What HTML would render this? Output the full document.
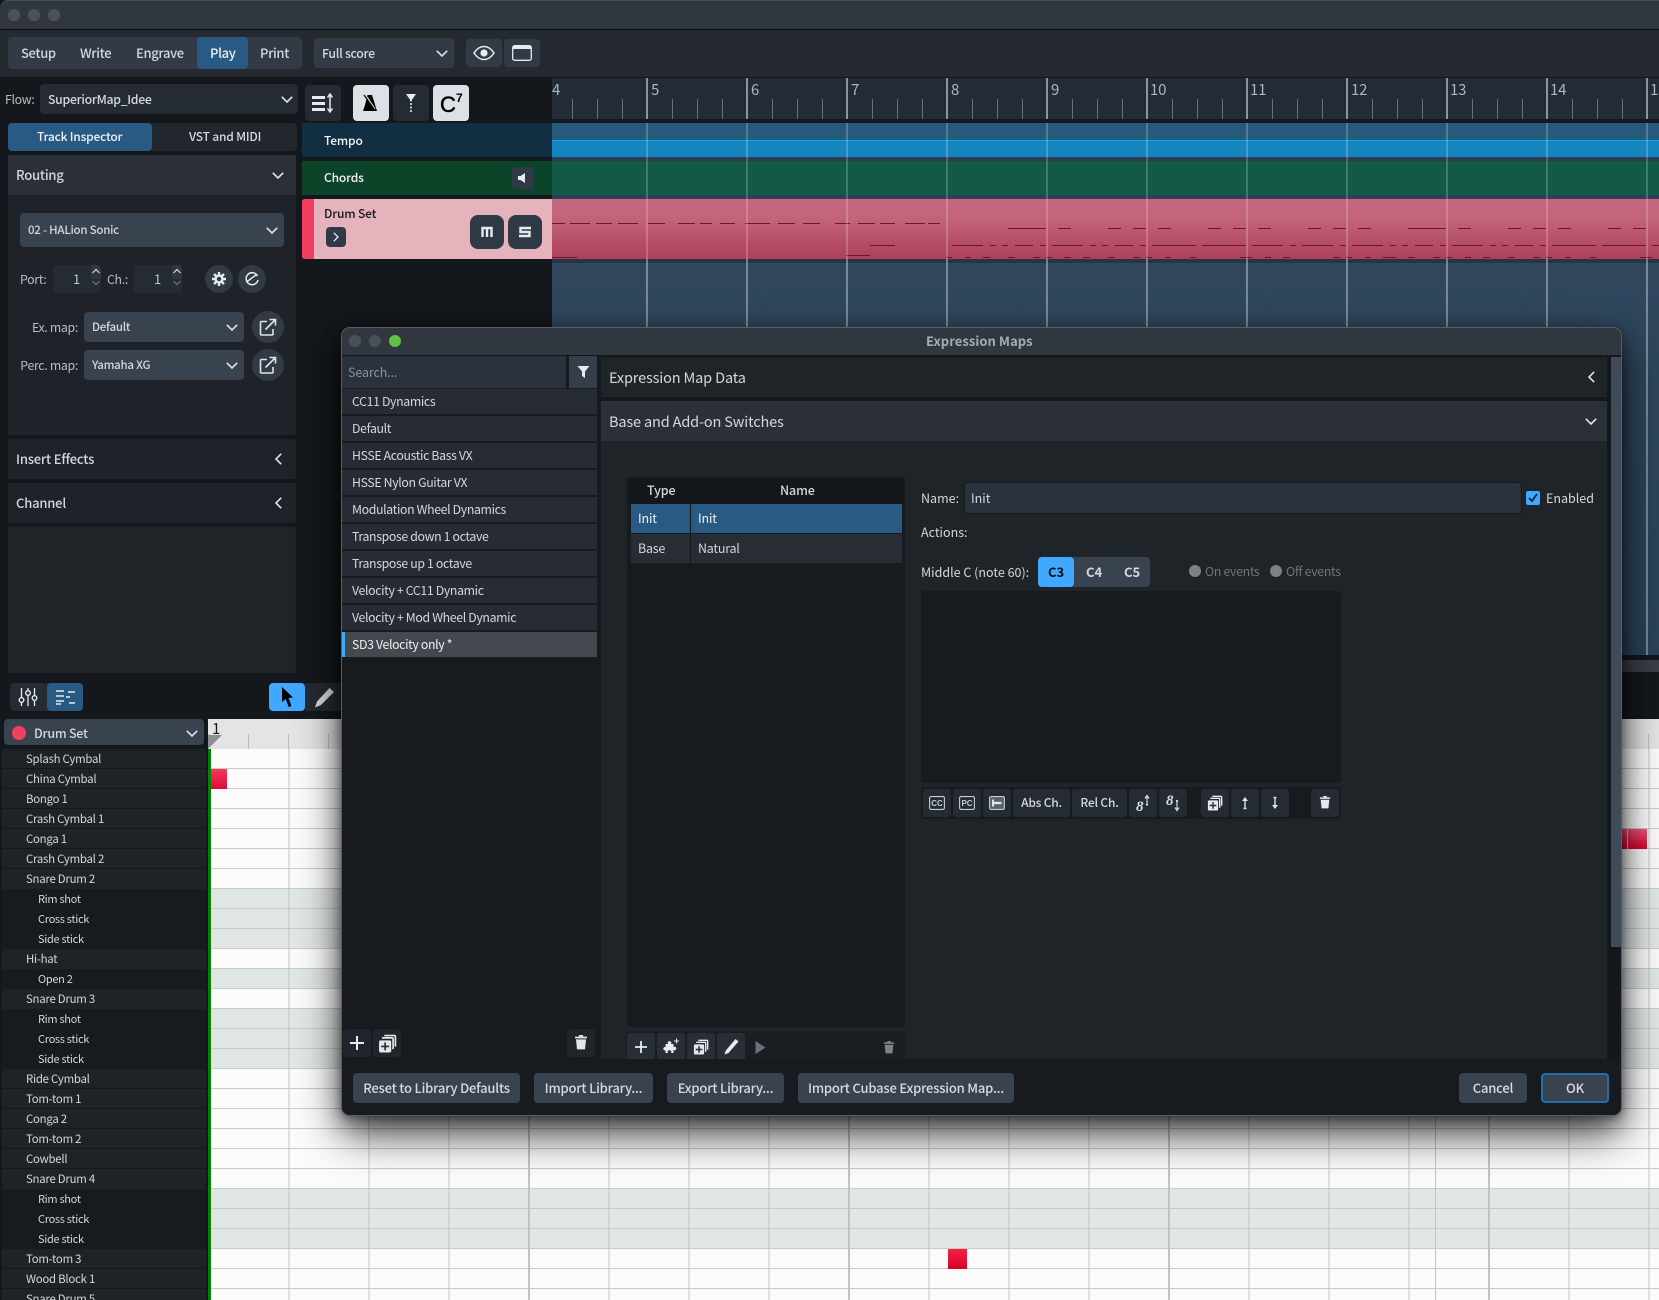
<!DOCTYPE html>
<html><head><meta charset="utf-8">
<style>
*{box-sizing:border-box}
html,body{margin:0;padding:0;width:1659px;height:1300px;overflow:hidden;background:#14171b}
body{position:relative;font-family:"Noto Sans CJK JP","Liberation Sans",sans-serif;color:#d4d8dc;font-size:13px}
.a{position:absolute}
.t{position:absolute;white-space:nowrap;line-height:20px;height:20px}
.b{position:absolute;border-radius:4px}
.nav{font-size:13px;font-weight:500;letter-spacing:-.35px;top:43px}
.sm{font-size:12.3px;letter-spacing:-.3px;color:#b8bec4}
.md{font-size:11.5px;letter-spacing:-.25px;font-weight:500}
.num{font-size:15px;color:#aab6c4;top:80px;letter-spacing:-.2px}
svg{position:absolute;overflow:visible}
.row{height:20px;line-height:20px;font-size:11.4px;letter-spacing:-.25px;padding-left:24px;background:#1f2328;border-bottom:1px solid #14171b;white-space:nowrap}
.row.s{padding-left:36px;background:#171a1f;border-bottom:0;font-size:11px;letter-spacing:-.3px;line-height:20px}
.g{height:20px;background:#fbfbfb;border-bottom:1px solid #c6cccc}
.g.x{background:#e1e6e6}
.li{position:absolute;left:0;width:255px;height:25px;background:#272c34;line-height:24px;padding-left:10px;font-size:12.3px;letter-spacing:-.35px;white-space:nowrap}
.btn{position:absolute;top:1073px;height:30px;background:#394350;border-radius:4px;line-height:30px;text-align:center;font-size:13px;letter-spacing:-.2px;font-weight:500;color:#d8dce0;white-space:nowrap}
.tb{position:absolute;height:28px;top:789px;background:#252b33;border-radius:3px;text-align:center;line-height:28px;font-size:12px;letter-spacing:-.2px;font-weight:500}
</style></head><body>
<svg width="0" height="0" style="position:absolute"><defs>
<symbol id="cd" viewBox="0 0 12 7"><path d="M.8.8 6 6 11.2.8" fill="none" stroke="#dfe3e7" stroke-width="1.6"/></symbol>
<symbol id="cl" viewBox="0 0 7 12"><path d="M6.2.8 1 6l5.2 5.2" fill="none" stroke="#dfe3e7" stroke-width="1.6"/></symbol>
<symbol id="dup" viewBox="0 0 18 18"><path d="M6 1.500h9.500a1 1 0 0 1 1 1V12M3.700 3.700h9.600a1 1 0 0 1 1 1v9.600" fill="none" stroke="#e4e7ea" stroke-width="1.600"/><rect x="1" y="6" width="11.500" height="11.500" rx="1.500" fill="#e4e7ea"/><path d="M6.800 8v7.500M3 11.800h7.500" stroke="#252b33" stroke-width="1.600"/></symbol>
<symbol id="tr" viewBox="0 0 14 16"><path d="M1 2.600h12v1.800H1zM2 5.400h10l-1 10H3z" fill="#e4e7ea"/><path d="M4.500 2.600 5.200 1h3.600l.7 1.600" fill="#e4e7ea"/></symbol>
<symbol id="ext" viewBox="0 0 18 18"><path d="M8 3.500H2.500a1 1 0 0 0-1 1V16a1 1 0 0 0 1 1H13a1 1 0 0 0 1-1v-5" fill="none" stroke="#dfe3e7" stroke-width="1.6"/><path d="M6.500 11.500 16 2M10.500 1.500H16.500V7.500" fill="none" stroke="#dfe3e7" stroke-width="1.6"/></symbol>
</defs></svg>

<!-- title bar -->
<div class="a" style="left:0;top:0;width:1659px;height:29px;background:#31373f;border-top:1px solid #4a4f56;border-top-left-radius:8px"></div>
<div class="a" style="left:8px;top:9px;width:12px;height:12px;border-radius:50%;background:#4c5159"></div>
<div class="a" style="left:28px;top:9px;width:12px;height:12px;border-radius:50%;background:#4c5159"></div>
<div class="a" style="left:48px;top:9px;width:12px;height:12px;border-radius:50%;background:#4c5159"></div>
<div class="a" style="left:0;top:29px;width:1659px;height:1px;background:#0d0f12"></div>
<!-- toolbar -->
<div class="a" style="left:0;top:30px;width:1659px;height:47px;background:#252a31"></div>
<div class="b" style="left:8px;top:37px;width:294px;height:32px;background:#323a45"></div>
<div class="b" style="left:197px;top:37px;width:51px;height:32px;background:#295a84"></div>
<div class="t nav" style="left:21px">Setup</div>
<div class="t nav" style="left:80px">Write</div>
<div class="t nav" style="left:136px">Engrave</div>
<div class="t nav" style="left:210px;color:#eef1f4">Play</div>
<div class="t nav" style="left:260px">Print</div>
<div class="b" style="left:314px;top:38px;width:140px;height:30px;background:#323a45"></div>
<div class="t" style="left:322px;top:43px;font-size:12.300px;letter-spacing:-.3px;font-weight:500">Full score</div>
<svg style="left:436px;top:50px" width="12" height="7"><use href="#cd"/></svg>
<div class="b" style="left:466px;top:39px;width:36px;height:28px;background:#323a45"></div>
<svg style="left:473px;top:45px" width="22" height="16" viewBox="0 0 22 16"><path d="M1 8c3-4.500 6.500-6.500 10-6.500S18 3.500 21 8c-3 4.500-6.500 6.500-10 6.500S4 12.500 1 8z" fill="none" stroke="#e8ebee" stroke-width="1.500"/><circle cx="11" cy="8" r="3.600" fill="#e8ebee"/></svg>
<div class="b" style="left:504px;top:39px;width:36px;height:28px;background:#323a45"></div>
<svg style="left:512px;top:45px" width="20" height="16" viewBox="0 0 20 16"><rect x=".7" y=".7" width="18.600" height="14.600" rx="2" fill="none" stroke="#e8ebee" stroke-width="1.300"/><path d="M1 1h18v3H1z" fill="#e8ebee"/></svg>

<!-- flow -->
<div class="t" style="left:5px;top:89px;font-size:12.300px;letter-spacing:-.3px;color:#b8bec4">Flow:</div>
<div class="b" style="left:40px;top:84px;width:258px;height:30px;background:#252b33"></div>
<div class="t" style="left:48px;top:89px;font-size:12.300px;letter-spacing:-.3px;font-weight:500">SuperiorMap_Idee</div>
<svg style="left:281px;top:96px" width="12" height="7"><use href="#cd"/></svg>

<!-- track buttons -->
<div class="b" style="left:305px;top:85px;width:36px;height:36px;background:#252b33"></div>
<svg style="left:312px;top:93px" width="23" height="20" viewBox="0 0 23 20"><path d="M0 3h13v3H0zM0 9h13v3H0zM0 15h13v3H0z" fill="#e8ebee"/><path d="M18 2v16M15.500 4.500 18 1l2.500 3.500M15.500 15.500 18 19l2.500-3.500" fill="none" stroke="#e8ebee" stroke-width="1.500"/></svg>
<div class="b" style="left:353px;top:85px;width:36px;height:36px;background:#dde0e6"></div>
<svg style="left:363px;top:94px" width="18" height="18" viewBox="0 0 18 18"><path d="M4.500 1H9l5 16H0l2-6z" fill="#000"/><path d="M4 3 12 15" stroke="#dde0e6" stroke-width="1.300"/><path d="M1 1l10 14" stroke="#000" stroke-width="1.200"/></svg>
<div class="b" style="left:393px;top:85px;width:36px;height:36px;background:#252b33"></div>
<svg style="left:405px;top:93px" width="14" height="20" viewBox="0 0 14 20"><path d="M1 1h10L6.800 7v1.500H5.200V7z" fill="#e8ebee"/><path d="M6 10v10" stroke="#e8ebee" stroke-width="1.600" stroke-dasharray="2 1.500"/></svg>
<div class="b" style="left:433px;top:85px;width:36px;height:36px;background:#dde0e6"></div>
<div class="t" style="left:440px;top:93px;font-size:22px;color:#000;-webkit-text-stroke:.5px #000;line-height:24px;height:24px;font-family:'Liberation Sans',sans-serif">C</div>
<div class="t" style="left:456px;top:88px;font-size:12px;font-weight:700;color:#000;font-family:'Liberation Sans',sans-serif">7</div>

<!-- inspector tabs -->
<div class="b" style="left:8px;top:123px;width:289px;height:28px;background:#22272e"></div>
<div class="b" style="left:8px;top:123px;width:144px;height:28px;background:#295a84"></div>
<div class="t" style="left:37px;top:127px;font-size:12px;letter-spacing:-.2px;font-weight:500;color:#eef1f4">Track Inspector</div>
<div class="t" style="left:189px;top:127px;font-size:12px;letter-spacing:-.2px;font-weight:500">VST and MIDI</div>

<!-- routing -->
<div class="a" style="left:8px;top:155px;width:288px;height:280px;background:#1f2329"></div>
<div class="a" style="left:8px;top:155px;width:288px;height:40px;background:#2b3038"></div>
<div class="t" style="left:16px;top:165px;font-size:13.200px;letter-spacing:-.3px;font-weight:500">Routing</div>
<svg style="left:272px;top:172px" width="12" height="7"><use href="#cd"/></svg>
<div class="b" style="left:20px;top:213px;width:264px;height:34px;background:#394350"></div>
<div class="t md" style="left:28px;top:220px">02 - HALion Sonic</div>
<svg style="left:266px;top:227px" width="12" height="7"><use href="#cd"/></svg>
<div class="t sm" style="left:20px;top:269px">Port:</div>
<div class="b" style="left:53px;top:265px;width:48px;height:28px;background:#252b33"></div>
<div class="a" style="left:91px;top:265px;width:10px;height:14px;background:#2f3640;border-radius:0 4px 0 0"></div>
<div class="t" style="left:73px;top:269px;font-size:13px;color:#c0c5ca">1</div>
<svg style="left:92px;top:268px" width="8" height="18" viewBox="0 0 8 18"><path d="M.5 5 4 1.500 7.500 5" fill="none" stroke="#d4d8dc" stroke-width="1.200"/><path d="M.5 13 4 16.500 7.500 13" fill="none" stroke="#6c747d" stroke-width="1.200"/></svg>
<div class="t sm" style="left:107px;top:269px">Ch.:</div>
<div class="b" style="left:134px;top:265px;width:48px;height:28px;background:#252b33"></div>
<div class="a" style="left:172px;top:265px;width:10px;height:14px;background:#2f3640;border-radius:0 4px 0 0"></div>
<div class="t" style="left:154px;top:269px;font-size:13px;color:#c0c5ca">1</div>
<svg style="left:173px;top:268px" width="8" height="18" viewBox="0 0 8 18"><path d="M.5 5 4 1.500 7.500 5" fill="none" stroke="#d4d8dc" stroke-width="1.200"/><path d="M.5 13 4 16.500 7.500 13" fill="none" stroke="#6c747d" stroke-width="1.200"/></svg>
<div class="a" style="left:205px;top:265px;width:28px;height:28px;border-radius:50%;background:#323a45"></div>
<svg style="left:212px;top:272px" width="14" height="14" viewBox="0 0 14 14"><circle cx="7" cy="7" r="3.400" fill="none" stroke="#e8ebee" stroke-width="2.400"/><path d="M7 0v3M7 11v3M0 7h3M11 7h3M2 2l2 2M10 10l2 2M12 2l-2 2M4 10l-2 2" stroke="#e8ebee" stroke-width="2.400"/></svg>
<div class="a" style="left:238px;top:265px;width:28px;height:28px;border-radius:50%;background:#323a45"></div>
<svg style="left:245px;top:272px" width="14" height="14" viewBox="0 0 14 14"><path d="M12.500 4A6 6 0 1 0 13 8" fill="none" stroke="#e8ebee" stroke-width="1.500"/><path d="M1.500 10 11.500 2.500" stroke="#e8ebee" stroke-width="1.500"/></svg>
<div class="t sm" style="right:1581px;top:317px">Ex. map:</div>
<div class="b" style="left:84px;top:312px;width:160px;height:30px;background:#394350"></div>
<div class="t md" style="left:92px;top:317px">Default</div>
<svg style="left:226px;top:324px" width="12" height="7"><use href="#cd"/></svg>
<div class="a" style="left:252px;top:311px;width:32px;height:32px;border-radius:50%;background:#323a45"></div>
<svg style="left:259px;top:318px" width="18" height="18"><use href="#ext"/></svg>
<div class="t sm" style="right:1581px;top:355px">Perc. map:</div>
<div class="b" style="left:84px;top:350px;width:160px;height:30px;background:#394350"></div>
<div class="t md" style="left:92px;top:355px">Yamaha XG</div>
<svg style="left:226px;top:362px" width="12" height="7"><use href="#cd"/></svg>
<div class="a" style="left:252px;top:349px;width:32px;height:32px;border-radius:50%;background:#323a45"></div>
<svg style="left:259px;top:356px" width="18" height="18"><use href="#ext"/></svg>

<div class="a" style="left:8px;top:439px;width:288px;height:40px;background:#1f2329"></div>
<div class="t" style="left:16px;top:449px;font-size:13px;letter-spacing:-.2px;font-weight:500">Insert Effects</div>
<svg style="left:275px;top:453px" width="7" height="12"><use href="#cl"/></svg>
<div class="a" style="left:8px;top:483px;width:288px;height:40px;background:#1f2329"></div>
<div class="t" style="left:16px;top:493px;font-size:13px;letter-spacing:-.2px;font-weight:500">Channel</div>
<svg style="left:275px;top:497px" width="7" height="12"><use href="#cl"/></svg>
<div class="a" style="left:8px;top:527px;width:288px;height:146px;background:#1f2429"></div>

<!-- timeline -->
<div class="a" style="left:552px;top:78px;width:1107px;height:41px;background:#232b36"></div>
<div class="a" style="left:552px;top:99px;width:1107px;height:20px;background:linear-gradient(90deg,#66727f 1px,transparent 1px) 20px 0/25px 100%"></div>
<div class="a" style="left:552px;top:123px;width:1107px;height:17px;background:#255a7d"></div>
<div class="a" style="left:552px;top:140px;width:1107px;height:1px;background:#0ea5f5"></div>
<div class="a" style="left:552px;top:141px;width:1107px;height:16px;background:#1585c0"></div>
<div class="a" style="left:552px;top:157px;width:1107px;height:4px;background:#2c3e55"></div>
<div class="a" style="left:552px;top:161px;width:1107px;height:34px;background:#125a46"></div>
<div class="a" style="left:552px;top:195px;width:1107px;height:4px;background:#2c3e55"></div>
<div class="a" style="left:552px;top:199px;width:1107px;height:60px;background:linear-gradient(#c5687e,#c1637a 35%,#ad3f5a)"></div>
<svg style="left:0;top:0" width="1659" height="300" viewBox="0 0 1659 300"><g fill="none" stroke="#701528" stroke-width="1">
<path d="M552 223.500h13M570 223.500h20M596 223.500h16M618 223.500h20M648 223.500h17M678 223.500h17M700 223.500h12M720 223.500h15M745 223.500h25M778 223.500h17M803 223.500h17M835 223.500h15M858 223.500h17M880 223.500h15M905 223.500h20M928 223.500h12"/>
<path d="M1008 228.500h38M1058 228.500h13M1108 228.500h13M1133 228.500h13M1158 228.500h13M1208 228.500h13M1233 228.500h13M1258 228.500h13M1308 228.500h13M1333 228.500h13M1358 228.500h13M1408 228.500h38M1458 228.500h13M1508 228.500h13M1533 228.500h13M1558 228.500h13M1608 228.500h13M1633 228.500h13"/>
<path d="M870 245.500h25M952 245.500h31M990 245.500h6M1002 245.500h6M1015 245.500h18M1040 245.500h6M1052 245.500h31M1090 245.500h6M1102 245.500h6M1115 245.500h18M1140 245.500h6M1152 245.500h44M1202 245.500h44M1252 245.500h31M1290 245.500h6M1302 245.500h31M1340 245.500h6M1352 245.500h31M1390 245.500h6M1402 245.500h6M1415 245.500h18M1440 245.500h6M1452 245.500h31M1490 245.500h6M1502 245.500h6M1515 245.500h18M1540 245.500h6M1552 245.500h44M1602 245.500h44M1652 245.500h7"/>
<path d="M552 257.500h25M846 255.500h24M946 257.500h6M965 257.500h6M983 257.500h7M1008 257.500h7M1033 257.500h7M1046 257.500h6M1064 257.500h7M1083 257.500h7M1108 257.500h7M1133 257.500h7M1146 257.500h6M1165 257.500h6M1190 257.500h6M1240 257.500h12M1265 257.500h6M1283 257.500h7M1333 257.500h7M1346 257.500h6M1365 257.500h6M1383 257.500h13M1408 257.500h7M1433 257.500h7M1446 257.500h6M1465 257.500h6M1483 257.500h7M1508 257.500h7M1533 257.500h7M1546 257.500h6M1565 257.500h6M1590 257.500h6M1640 257.500h12"/>
</g></svg>
<div class="a" style="left:552px;top:259px;width:1107px;height:4px;background:#263447"></div>
<div class="a" style="left:552px;top:263px;width:1107px;height:392px;background:linear-gradient(#30475e,#2a4259)"></div>
<!-- measure lines -->
<div class="a" style="left:552px;top:78px;width:1107px;height:41px;background:linear-gradient(90deg,#8795a5 2px,transparent 2px) 94px 0/100px 100%"></div>
<div class="a" style="left:552px;top:123px;width:1107px;height:136px;background:linear-gradient(90deg,rgba(255,255,255,.2) 2px,transparent 2px) 94px 0/100px 100%"></div>
<div class="a" style="left:552px;top:259px;width:1107px;height:396px;background:linear-gradient(90deg,rgba(255,255,255,.36) 2px,transparent 2px) 94px 0/100px 100%"></div>
<div class="t num" style="left:552px">4</div>
<div class="t num" style="left:651px">5</div>
<div class="t num" style="left:751px">6</div>
<div class="t num" style="left:851px">7</div>
<div class="t num" style="left:951px">8</div>
<div class="t num" style="left:1051px">9</div>
<div class="t num" style="left:1150px">10</div>
<div class="t num" style="left:1250px">11</div>
<div class="t num" style="left:1351px">12</div>
<div class="t num" style="left:1450px">13</div>
<div class="t num" style="left:1550px">14</div>
<div class="t num" style="left:1650px">15</div>

<!-- track headers -->
<div class="a" style="left:302px;top:123px;width:250px;height:34px;background:#122e42"></div>
<div class="t" style="left:324px;top:131px;font-size:12px;letter-spacing:-.15px;font-weight:500;color:#f0f3f5">Tempo</div>
<div class="a" style="left:302px;top:161px;width:250px;height:34px;background:#0b4429"></div>
<div class="t" style="left:324px;top:168px;font-size:12px;letter-spacing:-.15px;font-weight:500;color:#f0f3f5">Chords</div>
<div class="b" style="left:512px;top:167px;width:22px;height:22px;background:#2f3a46"></div>
<svg style="left:518px;top:173px" width="7" height="10" viewBox="0 0 7 10"><path d="M0 3h2.500L7 0v10L2.500 7H0z" fill="#e8ebee"/></svg>
<div class="a" style="left:302px;top:199px;width:250px;height:60px;background:#e5b3bb;border-radius:3px 0 0 3px"></div>
<div class="a" style="left:302px;top:199px;width:12px;height:60px;background:#f23f5f;border-radius:3px 0 0 3px"></div>
<div class="t" style="left:324px;top:204px;font-size:12px;letter-spacing:-.15px;font-weight:500;color:#15181c">Drum Set</div>
<div class="b" style="left:326px;top:227px;width:20px;height:20px;background:#2f3a46"></div>
<svg style="left:333px;top:232px" width="6" height="10" viewBox="0 0 6 10"><path d="M.8.8 5 5 .8 9.200" fill="none" stroke="#e8ebee" stroke-width="1.300"/></svg>
<div class="a" style="left:470px;top:215px;width:34px;height:34px;border-radius:8px;background:#2f3a46"></div>
<svg style="left:481px;top:226px" width="12" height="12" viewBox="0 0 12 12"><path d="M1.500 11V2H10.500V11M6 2V11" fill="none" stroke="#e8ebee" stroke-width="2.400"/></svg>
<div class="a" style="left:508px;top:215px;width:34px;height:34px;border-radius:8px;background:#2f3a46"></div>
<svg style="left:518px;top:226px" width="14" height="12" viewBox="0 0 14 12"><path d="M13 2H2.500V6H11.500V10H1" fill="none" stroke="#e8ebee" stroke-width="2.400"/></svg>

<!-- horizontal scrollbar right -->
<div class="a" style="left:552px;top:660px;width:1107px;height:12px;background:#383f48"></div>

<!-- bottom toolbar -->
<div class="b" style="left:10px;top:683px;width:73px;height:28px;background:#252b33"></div>
<div class="b" style="left:47px;top:683px;width:36px;height:28px;background:#295a84"></div>
<svg style="left:18px;top:688px" width="20" height="18" viewBox="0 0 20 18"><path d="M3.500 0v18M10 0v18M16.500 0v18" stroke="#e8ebee" stroke-width="1.300"/><circle cx="3.500" cy="12" r="2.300" fill="#252b33" stroke="#e8ebee" stroke-width="1.400"/><circle cx="10" cy="5" r="2.300" fill="#252b33" stroke="#e8ebee" stroke-width="1.400"/><circle cx="16.500" cy="10" r="2.300" fill="#252b33" stroke="#e8ebee" stroke-width="1.400"/></svg>
<svg style="left:56px;top:690px" width="20" height="15" viewBox="0 0 20 15"><path d="M0 1h8M0 6h8M0 11h8M0 14h5M12 2h7M10 7h4M13 13h6" stroke="#e8ebee" stroke-width="1.500" fill="none"/></svg>
<div class="b" style="left:269px;top:683px;width:36px;height:28px;background:#3fa9ff"></div>
<svg style="left:281px;top:686px" width="13" height="22" viewBox="0 0 13 22"><path d="M1 1l11 10.500-4.500.5 3 8-2.800 1-3-8L1 16z" fill="#000"/></svg>
<div class="a" style="left:305px;top:683px;width:37px;height:28px;background:#252b33"></div>
<svg style="left:314px;top:687px" width="21" height="21" viewBox="0 0 21 21"><path d="M15.500 1 20 5 7 18 1 20.500 3 14.500z" fill="#d8dce0"/></svg>

<!-- drum set list -->
<div class="b" style="left:4px;top:719px;width:200px;height:26px;background:#394350"></div>
<div class="a" style="left:12px;top:726px;width:14px;height:14px;border-radius:50%;background:#f23f5f"></div>
<div class="t" style="left:34px;top:723px;font-size:12.500px;letter-spacing:-.25px;font-weight:500">Drum Set</div>
<svg style="left:186px;top:730px" width="12" height="7"><use href="#cd"/></svg>
<div class="a" style="left:2px;top:749px;width:204px;height:551px;overflow:hidden">
<div class="row">Splash Cymbal</div><div class="row">China Cymbal</div><div class="row">Bongo 1</div><div class="row">Crash Cymbal 1</div><div class="row">Conga 1</div><div class="row">Crash Cymbal 2</div><div class="row" style="border:0">Snare Drum 2</div><div class="row s">Rim shot</div><div class="row s">Cross stick</div><div class="row s">Side stick</div><div class="row" style="border:0">Hi-hat</div><div class="row s">Open 2</div><div class="row" style="border:0">Snare Drum 3</div><div class="row s">Rim shot</div><div class="row s">Cross stick</div><div class="row s">Side stick</div><div class="row">Ride Cymbal</div><div class="row">Tom-tom 1</div><div class="row">Conga 2</div><div class="row">Tom-tom 2</div><div class="row">Cowbell</div><div class="row" style="border:0">Snare Drum 4</div><div class="row s">Rim shot</div><div class="row s">Cross stick</div><div class="row s">Side stick</div><div class="row">Tom-tom 3</div><div class="row">Wood Block 1</div><div class="row">Snare Drum 5</div>
</div>

<!-- piano roll -->
<div class="a" style="left:208px;top:719px;width:1451px;height:30px;background:#e4e4e4"></div>
<div class="a" style="left:208px;top:734px;width:1451px;height:15px;background:linear-gradient(90deg,#b9bfbf 1px,transparent 1px) 40px 0/40px 100%"></div>
<div class="t" style="left:212px;top:719px;font-size:15px;color:#15181c">1</div>
<svg style="left:208px;top:735px" width="14" height="14" viewBox="0 0 14 14"><path d="M0 0h14L0 14z" fill="#8a9090"/></svg>
<div class="a" style="left:208px;top:749px;width:3px;height:551px;background:#078007"></div>
<div class="a" style="left:211px;top:749px;width:1448px;height:551px;overflow:hidden">
<div class="g"></div><div class="g"></div><div class="g"></div><div class="g"></div><div class="g"></div><div class="g"></div><div class="g"></div><div class="g x"></div><div class="g x"></div><div class="g x"></div><div class="g"></div><div class="g x"></div><div class="g"></div><div class="g x"></div><div class="g x"></div><div class="g x"></div><div class="g"></div><div class="g"></div><div class="g"></div><div class="g"></div><div class="g"></div><div class="g"></div><div class="g x"></div><div class="g x"></div><div class="g x"></div><div class="g"></div><div class="g"></div><div class="g"></div>
</div>
<div class="a" style="left:211px;top:749px;width:1448px;height:551px;background:linear-gradient(90deg,#bcc6c6 2px,transparent 2px) 317px 0/320px 100%,linear-gradient(90deg,#bcc6c6 1px,transparent 1px) 77.500px 0/80px 100%"></div>
<div class="a" style="left:1435px;top:749px;width:1px;height:551px;background:#bcc6c6"></div>
<div class="a" style="left:211px;top:769px;width:16px;height:20px;background:linear-gradient(#f33a58,#dc0c37)"></div>
<div class="a" style="left:948px;top:1249px;width:19px;height:20px;background:linear-gradient(#f2223f,#d9002b)"></div>
<div class="a" style="left:1600px;top:829px;width:47px;height:20px;background:linear-gradient(#f0557a,#d9002b)"></div>
<div class="a" style="left:1627px;top:829px;width:1px;height:20px;background:#e8b8c2"></div>

<!-- dialog -->
<div class="a" style="left:341px;top:327px;width:1281px;height:789px;background:#14171b;border:1px solid #5a5e63;border-radius:9px;box-shadow:0 18px 42px rgba(0,0,0,.72),0 8px 20px rgba(0,0,0,.25),0 2px 8px rgba(0,0,0,.3);overflow:hidden;z-index:5">
 <div style="position:absolute;left:-342px;top:-328px;width:1659px;height:1300px">
  <div class="a" style="left:342px;top:328px;width:1279px;height:27px;background:#31373f"></div>
  <div class="a" style="left:349px;top:335px;width:12px;height:12px;border-radius:50%;background:#4c5159"></div>
  <div class="a" style="left:369px;top:335px;width:12px;height:12px;border-radius:50%;background:#4c5159"></div>
  <div class="a" style="left:389px;top:335px;width:12px;height:12px;border-radius:50%;background:#5fc04a"></div>
  <div class="t" style="left:926px;top:331px;font-size:13px;font-weight:700;letter-spacing:.05px;color:#a6abb1">Expression Maps</div>

  <!-- left list -->
  <div class="a" style="left:342px;top:356px;width:259px;height:703px;background:#171b20"></div>
  <div class="a" style="left:342px;top:356px;width:224px;height:32px;background:#2a323d"></div>
  <div class="t" style="left:348px;top:362px;font-size:12.500px;letter-spacing:-.1px;color:#8b929a">Search...</div>
  <div class="a" style="left:569px;top:356px;width:28px;height:32px;background:#353f4b"></div>
  <svg style="left:577px;top:365px" width="13" height="14" viewBox="0 0 13 14"><path d="M.5 1h12L8 6.500V13L5 11V6.500z" fill="#e8ebee"/></svg>
  <div class="a" style="left:342px;top:389px;width:255px;height:268px">
   <div class="li" style="top:0">CC11 Dynamics</div>
   <div class="li" style="top:27px">Default</div>
   <div class="li" style="top:54px">HSSE Acoustic Bass VX</div>
   <div class="li" style="top:81px">HSSE Nylon Guitar VX</div>
   <div class="li" style="top:108px">Modulation Wheel Dynamics</div>
   <div class="li" style="top:135px">Transpose down 1 octave</div>
   <div class="li" style="top:162px">Transpose up 1 octave</div>
   <div class="li" style="top:189px">Velocity + CC11 Dynamic</div>
   <div class="li" style="top:216px">Velocity + Mod Wheel Dynamic</div>
   <div class="li" style="top:243px;background:#44494f;border-left:3px solid #3fa9ff;padding-left:7px;color:#eef0f2">SD3 Velocity only *</div>
  </div>
  <div class="b" style="left:343px;top:1029px;width:28px;height:28px;background:#20252b"></div>
  <svg style="left:349px;top:1035px" width="16" height="16" viewBox="0 0 16 16"><path d="M8 1v14M1 8h14" stroke="#e8ebee" stroke-width="2"/></svg>
  <div class="b" style="left:373px;top:1029px;width:28px;height:28px;background:#20252b"></div>
  <svg style="left:378px;top:1034px" width="19" height="19"><use href="#dup"/></svg>
  <div class="b" style="left:567px;top:1029px;width:28px;height:28px;background:#20252b"></div>
  <svg style="left:574px;top:1034px" width="14" height="16"><use href="#tr"/></svg>

  <!-- right panel -->
  <div class="a" style="left:601px;top:357px;width:1006px;height:40px;background:#1f2429"></div>
  <div class="t" style="left:609px;top:368px;font-size:14.500px;letter-spacing:-.15px">Expression Map Data</div>
  <svg style="left:1588px;top:371px" width="7" height="12"><use href="#cl"/></svg>
  <div class="a" style="left:601px;top:401px;width:1006px;height:40px;background:#2b3038"></div>
  <div class="t" style="left:609px;top:412px;font-size:14.500px;letter-spacing:-.15px">Base and Add-on Switches</div>
  <svg style="left:1585px;top:418px" width="12" height="7"><use href="#cd"/></svg>
  <div class="a" style="left:601px;top:441px;width:1006px;height:618px;background:#1f2429"></div>
  <!-- table -->
  <div class="a" style="left:627px;top:477px;width:278px;height:550px;background:#171b20;border-radius:3px"></div>
  <div class="a" style="left:627px;top:478px;width:278px;height:26px;background:#14171b"></div>
  <div class="t" style="left:647px;top:480px;font-size:12.500px;letter-spacing:-.15px;font-weight:500">Type</div>
  <div class="t" style="left:780px;top:480px;font-size:12.500px;letter-spacing:-.15px;font-weight:500">Name</div>
  <div class="a" style="left:631px;top:504px;width:271px;height:29px;background:#295a84"></div>
  <div class="a" style="left:690px;top:504px;width:1px;height:59px;background:#14171b"></div>
  <div class="t" style="left:638px;top:508px;font-size:12.500px;letter-spacing:-.15px;color:#eef1f4">Init</div>
  <div class="t" style="left:698px;top:508px;font-size:12.500px;letter-spacing:-.15px;color:#eef1f4">Init</div>
  <div class="a" style="left:631px;top:534px;width:271px;height:29px;background:#282c35"></div>
  <div class="a" style="left:690px;top:534px;width:1px;height:29px;background:#14171b"></div>
  <div class="t" style="left:638px;top:538px;font-size:12.500px;letter-spacing:-.25px">Base</div>
  <div class="t" style="left:698px;top:538px;font-size:12.500px;letter-spacing:-.25px">Natural</div>
  <!-- table toolbar -->
  <div class="a" style="left:626px;top:1031px;width:279px;height:28px;background:#1a1e23;border-radius:3px 3px 0 0"></div>
  <div class="b" style="left:627px;top:1033px;width:28px;height:26px;background:#282e36;border-radius:3px 3px 0 0"></div>
  <svg style="left:634px;top:1040px" width="14" height="14" viewBox="0 0 14 14"><path d="M7 1v12M1 7h12" stroke="#e8ebee" stroke-width="1.800"/></svg>
  <div class="b" style="left:657px;top:1033px;width:28px;height:26px;background:#282e36;border-radius:3px 3px 0 0"></div>
  <svg style="left:663px;top:1038px" width="17" height="17" viewBox="0 0 17 17"><path d="M4 5h2.500a1.800 1.800 0 1 1 3 0H12v3a1.800 1.800 0 1 1 0 3v3H9.500a1.800 1.800 0 1 0-3 0H4v-2.500a1.800 1.800 0 1 1 0-3.500z" fill="#e8ebee" transform="translate(-1.500 1)"/><path d="M13.500 .5v5M11 3h5" stroke="#e8ebee" stroke-width="1"/></svg>
  <div class="b" style="left:687px;top:1033px;width:28px;height:26px;background:#282e36;border-radius:3px 3px 0 0"></div>
  <svg style="left:693px;top:1039px" width="16" height="16"><use href="#dup"/></svg>
  <div class="b" style="left:717px;top:1033px;width:28px;height:26px;background:#282e36;border-radius:3px 3px 0 0"></div>
  <svg style="left:724px;top:1039px" width="15" height="16" viewBox="0 0 15 16"><path d="M11.500 0 14.500 2.500 4.500 14 .5 15.500 1.800 11.500z" fill="#e8ebee"/></svg>
  <svg style="left:755px;top:1041px" width="11" height="13" viewBox="0 0 11 13"><path d="M.5 0 10.500 6.500.5 13z" fill="#6b7178"/></svg>
  <svg style="left:883px;top:1040px" width="12" height="14"><use href="#tr" opacity=".5"/></svg>

  <!-- form -->
  <div class="t" style="left:921px;top:488px;font-size:12.500px">Name:</div>
  <div class="a" style="left:964px;top:482px;width:558px;height:32px;background:#2a323d;border:1px solid #14171b;border-radius:4px"></div>
  <div class="t" style="left:971px;top:488px;font-size:12.500px">Init</div>
  <div class="a" style="left:1526px;top:491px;width:14px;height:14px;background:#3fa9ff;border-radius:2px"></div>
  <svg style="left:1528px;top:493px" width="10" height="10" viewBox="0 0 10 10"><path d="M1 5l3 3 5-7" fill="none" stroke="#10222f" stroke-width="1.800"/></svg>
  <div class="t" style="left:1546px;top:488px;font-size:12.500px">Enabled</div>
  <div class="t" style="left:921px;top:522px;font-size:12.500px">Actions:</div>
  <div class="t" style="left:921px;top:562px;font-size:12.500px">Middle C (note 60):</div>
  <div class="b" style="left:1038px;top:557px;width:112px;height:30px;background:#394350"></div>
  <div class="b" style="left:1038px;top:557px;width:36px;height:30px;background:#3fa9ff"></div>
  <div class="t" style="left:1048px;top:562px;font-size:13px;font-weight:700;color:#0a0e12">C3</div>
  <div class="t" style="left:1086px;top:562px;font-size:13px;font-weight:700">C4</div>
  <div class="t" style="left:1124px;top:562px;font-size:13px;font-weight:700">C5</div>
  <div class="a" style="left:1189px;top:565px;width:12px;height:12px;border-radius:50%;background:#7c8187"></div>
  <div class="t" style="left:1205px;top:561px;font-size:12.300px;letter-spacing:-.3px;color:#6f757b">On events</div>
  <div class="a" style="left:1270px;top:565px;width:12px;height:12px;border-radius:50%;background:#7c8187"></div>
  <div class="t" style="left:1286px;top:561px;font-size:12.300px;letter-spacing:-.3px;color:#6f757b">Off events</div>
  <div class="a" style="left:921px;top:591px;width:420px;height:192px;background:#171b20;border-radius:3px"></div>
  <div class="a" style="left:921px;top:787px;width:420px;height:32px;background:#171b20;border-radius:3px"></div>
  <div class="tb" style="left:923px;width:28px"></div>
  <svg style="left:929px;top:796px" width="16" height="14" viewBox="0 0 16 14"><rect x=".6" y=".6" width="14.800" height="12.800" rx="1.500" fill="none" stroke="#c8cdd2" stroke-width="1.100"/><text x="8" y="10" text-anchor="middle" font-size="8" font-weight="700" fill="#c8cdd2" font-family="Liberation Sans">CC</text></svg>
  <div class="tb" style="left:953px;width:28px"></div>
  <svg style="left:959px;top:796px" width="16" height="14" viewBox="0 0 16 14"><rect x=".6" y=".6" width="14.800" height="12.800" rx="1.500" fill="none" stroke="#c8cdd2" stroke-width="1.100"/><text x="8" y="10" text-anchor="middle" font-size="8" font-weight="700" fill="#c8cdd2" font-family="Liberation Sans">PC</text></svg>
  <div class="tb" style="left:983px;width:28px"></div>
  <svg style="left:989px;top:796px" width="16" height="14" viewBox="0 0 16 14"><rect x=".6" y=".6" width="14.800" height="12.800" rx="1.500" fill="#5a616a" stroke="#c8cdd2" stroke-width="1.100"/><path d="M4 3.500v7" stroke="#e0e4e8" stroke-width="2"/><path d="M4 7h8.500" stroke="#e0e4e8" stroke-width="2.400"/></svg>
  <div class="tb" style="left:1013px;width:57px">Abs Ch.</div>
  <div class="tb" style="left:1072px;width:55px">Rel Ch.</div>
  <div class="tb" style="left:1129px;width:28px"></div>
  <svg style="left:1136px;top:794px" width="15" height="18" viewBox="0 0 15 18"><text x="0" y="17" font-size="15" font-style="italic" font-weight="700" fill="#d8dce0" font-family="Liberation Serif">8</text><path d="M11 3v6M9 4.500 11 1.500l2 3" fill="none" stroke="#d8dce0" stroke-width="1.200"/><circle cx="11" cy="10.500" r="1.200" fill="#d8dce0"/></svg>
  <div class="tb" style="left:1159px;width:28px"></div>
  <svg style="left:1166px;top:794px" width="15" height="18" viewBox="0 0 15 18"><text x="0" y="11" font-size="15" font-style="italic" font-weight="700" fill="#d8dce0" font-family="Liberation Serif">8</text><circle cx="11" cy="7" r="1.200" fill="#d8dce0"/><path d="M11 8v7M9 13.500 11 16.500l2-3" fill="none" stroke="#d8dce0" stroke-width="1.200"/></svg>
  <div class="tb" style="left:1201px;width:28px"></div>
  <svg style="left:1207px;top:795px" width="16" height="16"><use href="#dup"/></svg>
  <div class="tb" style="left:1231px;width:28px"></div>
  <svg style="left:1241px;top:796px" width="8" height="14" viewBox="0 0 8 14"><path d="M4 1 7 5H1z" fill="#e0e4e8"/><path d="M4 4v8" stroke="#e0e4e8" stroke-width="1.400"/><path d="M2.500 12.500h3" stroke="#e0e4e8" stroke-width="1.400"/></svg>
  <div class="tb" style="left:1261px;width:28px"></div>
  <svg style="left:1271px;top:796px" width="8" height="14" viewBox="0 0 8 14"><path d="M4 13 7 9H1z" fill="#e0e4e8"/><path d="M4 2v8" stroke="#e0e4e8" stroke-width="1.400"/><path d="M2.500 1.500h3" stroke="#e0e4e8" stroke-width="1.400"/></svg>
  <div class="tb" style="left:1311px;width:28px"></div>
  <svg style="left:1319px;top:795px" width="12" height="14"><use href="#tr"/></svg>

  <!-- scrollbar -->
  <div class="a" style="left:1611px;top:357px;width:10px;height:590px;background:#3f4b59"></div>

  <!-- bottom -->
  <div class="a" style="left:342px;top:1059px;width:1279px;height:56px;background:#171b20"></div>
  <div class="btn" style="left:353px;width:167px">Reset to Library Defaults</div>
  <div class="btn" style="left:534px;width:119px">Import Library...</div>
  <div class="btn" style="left:667px;width:117px">Export Library...</div>
  <div class="btn" style="left:798px;width:216px">Import Cubase Expression Map...</div>
  <div class="btn" style="left:1459px;width:68px">Cancel</div>
  <div class="btn" style="left:1541px;width:68px;border:2px solid #1f6fae;line-height:26px">OK</div>
 </div>
</div>
</body></html>
